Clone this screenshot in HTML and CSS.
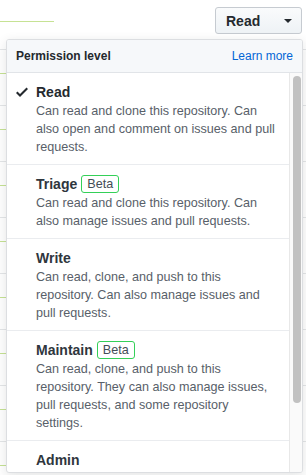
FILE: index.html
```html
<!DOCTYPE html>
<html>
<head>
	<title>Permission level</title>
	<link rel="stylesheet" href="styles.css">
	<meta charset="utf-8">
</head>
<body>
	<div class="page">
		<div class="topbar">
			<span class="bar"></span>
			<button class="select__button">Read <span class="caret"></span></button>
		</div>

		<div class="rows">
			<div class="row"><span class="bar"></span></div>
			<div class="row"><span class="bar"></span></div>
			<div class="row"><span class="bar"></span></div>
			<div class="row"><span class="bar"></span></div>
			<div class="row"><span class="bar"></span></div>
			<div class="row"><span class="bar"></span></div>
			<div class="row"><span class="bar"></span></div>
			<div class="row"><span class="bar"></span></div>
		</div>

		<div class="menu">
			<div class="menu__header">
				<span class="menu__title">Permission level</span>
				<a class="menu__link" href="#">Learn more</a>
			</div>
			<div class="menu__body">
				<div class="menu__list">
					<div class="item item--selected">
						<svg class="check" width="12" height="16" viewBox="0 0 12 16"><path d="M12 5l-8 8-4-4 1.5-1.5L4 10l6.5-6.5L12 5z"/></svg>
						<div class="item__title">Read</div>
						<div class="item__desc">Can read and clone this repository. Can also open and comment on issues and pull requests.</div>
					</div>
					<div class="item">
						<div class="item__title">Triage <span class="badge">Beta</span></div>
						<div class="item__desc">Can read and clone this repository. Can also manage issues and pull requests.</div>
					</div>
					<div class="item">
						<div class="item__title">Write</div>
						<div class="item__desc">Can read, clone, and push to this repository. Can also manage issues and pull requests.</div>
					</div>
					<div class="item">
						<div class="item__title">Maintain <span class="badge">Beta</span></div>
						<div class="item__desc">Can read, clone, and push to this repository. They can also manage issues, pull requests, and some repository settings.</div>
					</div>
					<div class="item">
						<div class="item__title">Admin</div>
						<div class="item__desc">Can read, clone, and push to this repository. Can also manage issues, pull requests, and repository settings.</div>
					</div>
				</div>
				<div class="scrollbar"><div class="scrollbar__thumb"></div></div>
			</div>
		</div>
	</div>
</body>
</html>
```
FILE: styles.css
```css
* {
	box-sizing: border-box;
	margin: 0;
	padding: 0;
}

body {
	font-family: "Liberation Sans", Arial, sans-serif;
	background: #fff;
	color: #24292e;
	overflow: hidden;
}

.page {
	position: relative;
	height: 475px;
}

.topbar {
	height: 40px;
	display: flex;
	justify-content: space-between;
	align-items: flex-start;
	padding: 7px 4px 0 0;
}

.topbar .bar {
	width: 54px;
	height: 1px;
	margin-top: 14px;
	background: #c6e294;
}

.select__button {
	width: 87px;
	height: 27px;
	display: flex;
	align-items: center;
	justify-content: space-between;
	padding: 0 9px 0 10px;
	font-family: inherit;
	font-size: 14px;
	font-weight: bold;
	color: #24292e;
	background: linear-gradient(#fafbfc, #eff3f6 90%);
	border: 1px solid #c6cbd1;
	border-radius: 3px;
}

.caret {
	width: 0;
	height: 0;
	border-top: 4px solid #24292e;
	border-left: 4px solid transparent;
	border-right: 4px solid transparent;
}

.rows {
	padding-top: 9px;
}

.row {
	height: 56px;
	border-top: 1px solid #e4e6e8;
	padding-top: 23px;
}

.row .bar {
	display: block;
	width: 40px;
	height: 1px;
	background: #c6e294;
}

.menu {
	position: absolute;
	top: 39px;
	left: 6px;
	width: 297px;
	background: #fff;
	border: 1px solid #dcdee1;
	border-radius: 3px;
	box-shadow: 0 3px 12px rgba(27, 31, 35, .12);
	overflow: hidden;
}

.menu__header {
	display: flex;
	justify-content: space-between;
	align-items: center;
	height: 33px;
	padding: 0 9px;
	background: #f6f8fa;
	border-bottom: 1px solid #e1e4e8;
	font-size: 12px;
}

.menu__title {
	font-weight: bold;
	color: #24292e;
}

.menu__link {
	color: #0366d6;
	text-decoration: none;
}

.menu__body {
	display: flex;
	height: 399px;
}

.menu__list {
	flex: 1;
	overflow: hidden;
}

.scrollbar {
	width: 13px;
	padding: 3px 1px 0 3px;
	background: #fafafa;
	border-left: 1px solid #e8e8e8;
}

.scrollbar__thumb {
	height: 327px;
	background: #c1c1c1;
	border-radius: 4px;
}

.item {
	position: relative;
	padding: 9px 11px 8px 29px;
	border-bottom: 1px solid #eaecef;
}

.check {
	position: absolute;
	left: 9px;
	top: 11px;
	fill: #24292e;
}

.item__title {
	display: flex;
	align-items: center;
	height: 20px;
	font-size: 14px;
	font-weight: bold;
	color: #2f363d;
}

.item--selected .item__title {
	color: #24292e;
}

.badge {
	margin-left: 4px;
	padding: 0 5px;
	height: 18px;
	line-height: 16px;
	font-size: 12.6px;
	font-weight: normal;
	color: #444d56;
	border: 1px solid #34d058;
	border-radius: 3px;
}

.item__desc {
	font-size: 12.6px;
	line-height: 18px;
	color: #586069;
}
```
